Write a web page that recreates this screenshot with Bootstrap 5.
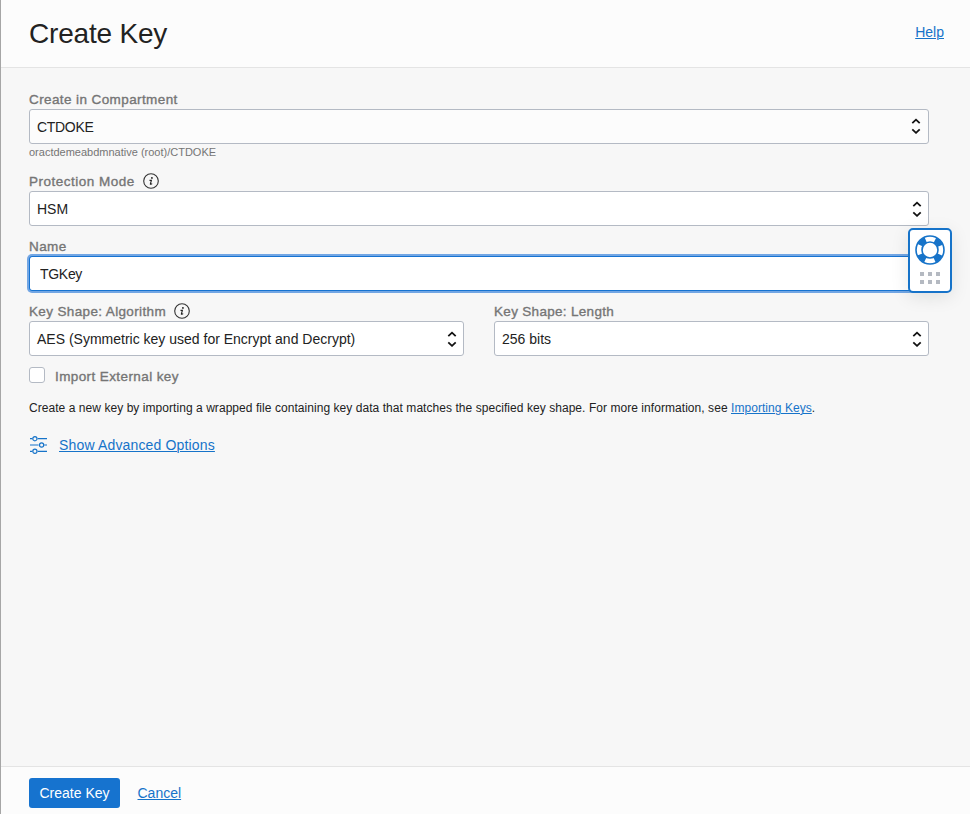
<!DOCTYPE html>
<html lang="en">
<head>
<meta charset="utf-8">
<title>Create Key</title>
<meta name="viewport" content="width=device-width, initial-scale=1">
<link href="https://cdn.jsdelivr.net/npm/bootstrap@5.3.0/dist/css/bootstrap.min.css" rel="stylesheet">
<style>
body{font-family:"Liberation Sans",Arial,sans-serif;font-size:14px;line-height:20px;color:#222;background:#f7f7f7;overflow:hidden}
.panel{border-left:1px solid #a6a6a6}
.panel-head{height:68px;padding:0 26px 0 28px;background:#fcfcfc;border-bottom:1px solid #e4e4e4}
.panel-head h1{font-size:28px;line-height:34px;font-weight:400;letter-spacing:-.2px}
.panel-body{padding:21px 41px 0 28px}
.panel-foot{height:48px;padding:11px 28px 0;background:#fcfcfc;border-top:1px solid #e4e4e4}
a{color:#1673c9;text-underline-offset:1px;text-decoration-thickness:1px}
.form-label{height:20px;margin:0;font-size:13.5px;letter-spacing:.4px;color:#757575;-webkit-text-stroke:.35px #757575}
.form-label span{padding-top:2px}
.form-label svg{margin-left:8px}
.wider{letter-spacing:.5px}
.narrower{letter-spacing:.31px}
.nudge{letter-spacing:.36px}
.box{height:35px;padding:0 6px 0 7px;border:1px solid #b4bac4;border-radius:3px;background:#fff;color:#222}
.box-muted{padding-right:7px;background:#fcfcfc}
.box-muted span{letter-spacing:-.3px}
.box-muted svg{margin-bottom:2px}
.form-control.box-name,.form-control.box-name:focus{height:35px;padding:0 10px;font-size:14px;border:1px solid #1673d1;border-radius:3px;color:#222;box-shadow:0 0 0 2px #72a6e4;letter-spacing:-.3px}
.hint{font-size:11px;line-height:17px;height:27px;color:#757575}
.gap-row{--bs-gutter-x:30px}
.field{margin-bottom:10px}
.checks{margin-top:11px;gap:10px}
.form-check-input.tick{width:16px;height:16px;margin:0;border:1px solid #b4bac4;border-radius:3px}
.note{font-size:12px;line-height:18px;letter-spacing:.054px;margin:12px 0 0}
.btn-create{width:91px;height:30px;padding:0;font-size:14px;color:#fff;background:#1673cf;border:0;border-radius:3px}
.cancel{margin:5px 0 0 17.5px}
.help-tab{left:908px;top:228px;width:44px;height:65px;padding-top:5px;background:#fff;border:2px solid #1673c9;border-radius:5px;box-shadow:0 4px 18px rgba(0,30,20,.1)}
.dots{margin-top:7px}
.advanced{margin-top:18px;gap:12px;letter-spacing:.16px}
</style>
</head>
<body>
<svg class="d-none">
<symbol id="chevrons" viewBox="0 0 10 16"><path d="M1.3 5.2 5 1.7 8.7 5.2M1.3 11.3 5 14.8 8.7 11.3" fill="none" stroke="#111" stroke-width="1.8"/></symbol>
<symbol id="info" viewBox="0 0 16 16"><circle cx="8" cy="8" r="7.3" fill="none" stroke="#333" stroke-width="1.1"/><circle cx="8.9" cy="4.9" r=".95" fill="#222"/><path d="M6.5 7.4H8.4L7.3 11.1Q7.5 11.6 9.2 10.6" fill="none" stroke="#222" stroke-width="1.1"/></symbol>
</svg>
<div class="panel d-flex flex-column vh-100">
<header class="panel-head d-flex align-items-center justify-content-between">
<h1 class="m-0">Create Key</h1>
<a href="#" class="mb-1">Help</a>
</header>
<main class="panel-body flex-grow-1">
<div class="form-label d-flex align-items-center"><span>Create in Compartment</span></div>
<div class="box box-muted d-flex align-items-center justify-content-between"><span>CTDOKE</span><svg width="10" height="16"><use href="#chevrons"/></svg></div>
<div class="hint">oractdemeabdmnative (root)/CTDOKE</div>
<div class="form-label d-flex align-items-center"><span class="wider">Protection Mode</span><svg width="16" height="16"><use href="#info"/></svg></div>
<div class="box field d-flex align-items-center justify-content-between"><span>HSM</span><svg width="10" height="16"><use href="#chevrons"/></svg></div>
<label class="form-label d-flex align-items-center" for="name"><span>Name</span></label>
<input id="name" class="form-control box-name field" value="TGKey">
<div class="row gap-row">
<div class="col-6">
<div class="form-label d-flex align-items-center"><span class="nudge">Key Shape: Algorithm</span><svg width="16" height="16"><use href="#info"/></svg></div>
<div class="box d-flex align-items-center justify-content-between"><span>AES (Symmetric key used for Encrypt and Decrypt)</span><svg width="10" height="16"><use href="#chevrons"/></svg></div>
</div>
<div class="col-6">
<div class="form-label d-flex align-items-center"><span class="narrower">Key Shape: Length</span></div>
<div class="box d-flex align-items-center justify-content-between"><span>256 bits</span><svg width="10" height="16"><use href="#chevrons"/></svg></div>
</div>
</div>
<div class="checks d-flex">
<input type="checkbox" class="form-check-input tick" id="ext">
<label class="form-label" for="ext">Import External key</label>
</div>
<p class="note">Create a new key by importing a wrapped file containing key data that matches the specified key shape. For more information, see <a href="#">Importing Keys</a>.</p>
<div class="advanced d-flex align-items-center">
<svg width="18" height="18" viewBox="0 0 18 18" fill="none" stroke="#1673c9" stroke-width="1.2"><path d="M1 2.7H3.3M8.7 2.7H18M1 9H9.6M15.2 9H18M1 15.3H3.3M8.7 15.3H18"/><circle cx="5.9" cy="2.7" r="2.1"/><circle cx="12.6" cy="9" r="2.1"/><circle cx="5.9" cy="15.3" r="2.1"/></svg>
<a href="#">Show Advanced Options</a>
</div>
</main>
<footer class="panel-foot d-flex align-items-start">
<button class="btn btn-create">Create Key</button>
<a href="#" class="cancel">Cancel</a>
</footer>
</div>
<aside class="help-tab position-absolute d-flex flex-column align-items-center">
<svg width="30" height="30" viewBox="0 0 30 30"><circle cx="15" cy="15" r="14" fill="#fff" stroke="#1673c9" stroke-width="1.6"/><circle cx="15" cy="15" r="10.8" fill="none" stroke="#1673c9" stroke-width="6" stroke-dasharray="7.6 9.365" stroke-dashoffset="-4.68"/><circle cx="15" cy="15" r="8" fill="#fff" stroke="#1673c9" stroke-width="1.6"/></svg>
<svg class="dots" width="20" height="12" fill="#b4b9c1"><path d="M0 0h4v4H0zM8 0h4v4H8zM16 0h4v4h-4zM0 8h4v4H0zM8 8h4v4H8zM16 8h4v4h-4z"/></svg>
</aside>
<script src="https://cdn.jsdelivr.net/npm/bootstrap@5.3.0/dist/js/bootstrap.bundle.min.js"></script>
</body>
</html>
